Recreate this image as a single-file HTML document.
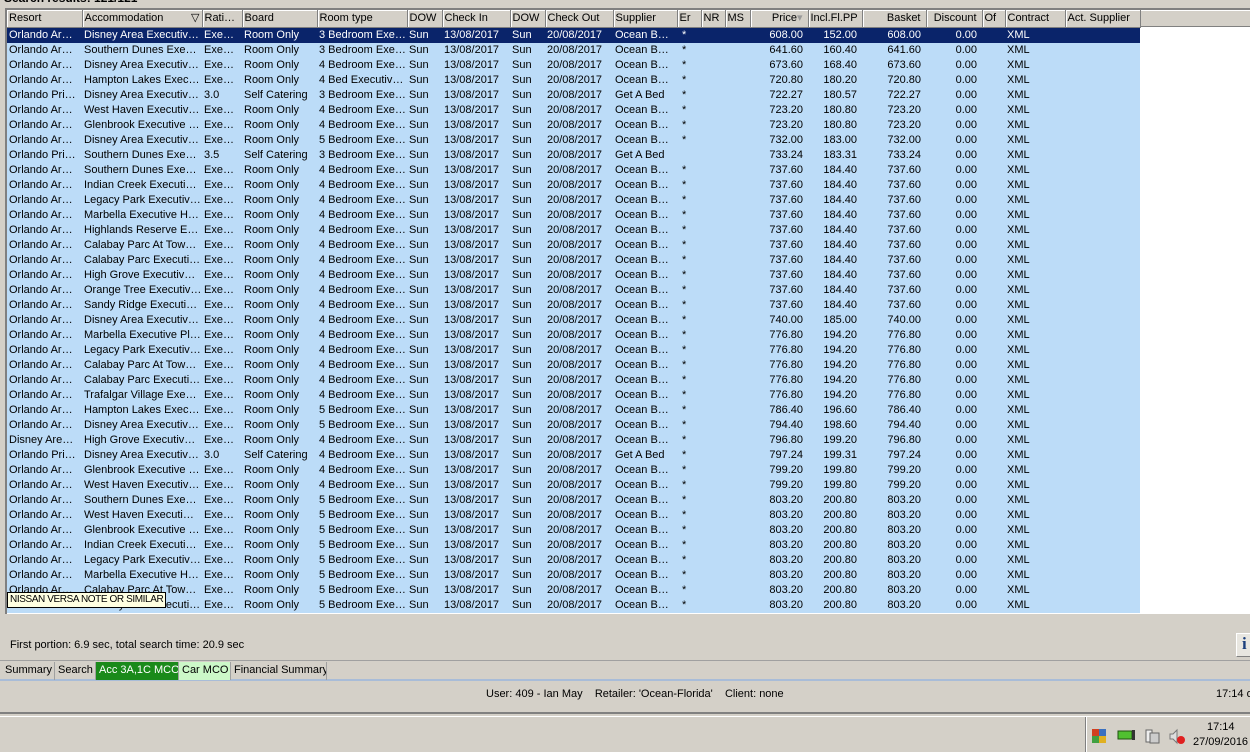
<!DOCTYPE html>
<html><head><meta charset="utf-8"><style>
*{margin:0;padding:0;box-sizing:border-box}
body{width:1250px;height:751px;background:#d4d0c8;font-family:"Liberation Sans",Tahoma,sans-serif;font-size:11px;position:relative;overflow:hidden;color:#000;white-space:nowrap}
.title{position:absolute;left:4px;top:-9px;font-weight:bold;font-size:12px}
.grid{position:absolute;left:5px;top:8px;width:1245px;height:606px;background:#fff;border-left:2px solid #808080;border-top:2px solid #808080}
table{position:absolute;left:0;top:0;border-collapse:collapse;table-layout:fixed;width:1133px}
td,th{height:15px;line-height:15px;padding:0 2px;white-space:nowrap;overflow:hidden;font-weight:normal;text-align:left}
th{height:17px;background:#d4d0c8;border-right:1px solid #808080;border-bottom:1px solid #808080;box-shadow:inset 1px 1px 0 #fff}
tr.r td{background:#bcdcf8}
tr.s td{background:#0a246a;color:#fff}
.n{text-align:right;padding-right:5px}
.hr{position:absolute;left:1133px;top:0;width:110px;height:17px;background:#d4d0c8;border-bottom:1px solid #808080;box-shadow:inset 1px 1px 0 #fff}
.tip{position:absolute;left:7px;top:592px;background:#ffffe1;border:1px solid #000;padding:0 2px;height:16px;line-height:14px;font-size:10px;letter-spacing:-0.4px}
.fp{position:absolute;left:10px;top:639px}
.ib{position:absolute;left:1236px;top:633px;width:20px;height:24px;background:#e8e6e0;border:1px solid #fff;border-right-color:#808080;border-bottom-color:#808080;font-family:"Liberation Serif",serif;font-weight:bold;font-size:17px;color:#1c3f7c;padding-left:5px}
.tabs{position:absolute;left:0;top:660px;width:1250px;height:21px;border-top:1px solid #a0a0a0;border-bottom:2px solid #a8bcd8}
.tab{position:absolute;top:1px;height:18px;line-height:17px;padding:0 3px;border-right:1px solid #a0a0a0;white-space:nowrap;overflow:hidden}
.sb{position:absolute;left:0;top:682px;width:1250px;height:32px;border-bottom:2px solid #808080}
.tb{position:absolute;left:0;top:716px;width:1250px;height:35px;border-top:1px solid #fff}
</style></head><body>
<div class="title">Search results: 121/121</div>
<div class="grid">
<div class="hr"></div>
<table>
<colgroup><col style="width:75px"><col style="width:120px"><col style="width:40px"><col style="width:75px"><col style="width:90px"><col style="width:35px"><col style="width:68px"><col style="width:35px"><col style="width:68px"><col style="width:64px"><col style="width:24px"><col style="width:24px"><col style="width:25px"><col style="width:58px"><col style="width:54px"><col style="width:64px"><col style="width:56px"><col style="width:23px"><col style="width:60px"><col style="width:75px"></colgroup>
<tr><th>Resort</th><th>Accommodation <span style="float:right">&#9661;</span></th><th>Rati…</th><th>Board</th><th>Room type</th><th>DOW</th><th>Check In</th><th>DOW</th><th>Check Out</th><th>Supplier</th><th>Er</th><th>NR</th><th>MS</th><th class="n">Price<span style="color:#999">&#9662;</span></th><th>Incl.Fl.PP</th><th class="n">Basket</th><th class="n">Discount</th><th>Of</th><th>Contract</th><th>Act. Supplier</th></tr>
<tr class="s"><td>Orlando Ar…</td><td>Disney Area Executiv…</td><td>Exe…</td><td>Room Only</td><td>3 Bedroom Exe…</td><td>Sun</td><td>13/08/2017</td><td>Sun</td><td>20/08/2017</td><td>Ocean B…</td><td>&nbsp;*</td><td></td><td></td><td class="n">608.00</td><td class="n">152.00</td><td class="n">608.00</td><td class="n">0.00</td><td></td><td>XML</td><td></td></tr>
<tr class="r"><td>Orlando Ar…</td><td>Southern Dunes Exe…</td><td>Exe…</td><td>Room Only</td><td>3 Bedroom Exe…</td><td>Sun</td><td>13/08/2017</td><td>Sun</td><td>20/08/2017</td><td>Ocean B…</td><td>&nbsp;*</td><td></td><td></td><td class="n">641.60</td><td class="n">160.40</td><td class="n">641.60</td><td class="n">0.00</td><td></td><td>XML</td><td></td></tr>
<tr class="r"><td>Orlando Ar…</td><td>Disney Area Executiv…</td><td>Exe…</td><td>Room Only</td><td>4 Bedroom Exe…</td><td>Sun</td><td>13/08/2017</td><td>Sun</td><td>20/08/2017</td><td>Ocean B…</td><td>&nbsp;*</td><td></td><td></td><td class="n">673.60</td><td class="n">168.40</td><td class="n">673.60</td><td class="n">0.00</td><td></td><td>XML</td><td></td></tr>
<tr class="r"><td>Orlando Ar…</td><td>Hampton Lakes Exec…</td><td>Exe…</td><td>Room Only</td><td>4 Bed Executiv…</td><td>Sun</td><td>13/08/2017</td><td>Sun</td><td>20/08/2017</td><td>Ocean B…</td><td>&nbsp;*</td><td></td><td></td><td class="n">720.80</td><td class="n">180.20</td><td class="n">720.80</td><td class="n">0.00</td><td></td><td>XML</td><td></td></tr>
<tr class="r"><td>Orlando Pri…</td><td>Disney Area Executiv…</td><td>3.0</td><td>Self Catering</td><td>3 Bedroom Exe…</td><td>Sun</td><td>13/08/2017</td><td>Sun</td><td>20/08/2017</td><td>Get A Bed</td><td>&nbsp;*</td><td></td><td></td><td class="n">722.27</td><td class="n">180.57</td><td class="n">722.27</td><td class="n">0.00</td><td></td><td>XML</td><td></td></tr>
<tr class="r"><td>Orlando Ar…</td><td>West Haven Executiv…</td><td>Exe…</td><td>Room Only</td><td>4 Bedroom Exe…</td><td>Sun</td><td>13/08/2017</td><td>Sun</td><td>20/08/2017</td><td>Ocean B…</td><td>&nbsp;*</td><td></td><td></td><td class="n">723.20</td><td class="n">180.80</td><td class="n">723.20</td><td class="n">0.00</td><td></td><td>XML</td><td></td></tr>
<tr class="r"><td>Orlando Ar…</td><td>Glenbrook Executive …</td><td>Exe…</td><td>Room Only</td><td>4 Bedroom Exe…</td><td>Sun</td><td>13/08/2017</td><td>Sun</td><td>20/08/2017</td><td>Ocean B…</td><td>&nbsp;*</td><td></td><td></td><td class="n">723.20</td><td class="n">180.80</td><td class="n">723.20</td><td class="n">0.00</td><td></td><td>XML</td><td></td></tr>
<tr class="r"><td>Orlando Ar…</td><td>Disney Area Executiv…</td><td>Exe…</td><td>Room Only</td><td>5 Bedroom Exe…</td><td>Sun</td><td>13/08/2017</td><td>Sun</td><td>20/08/2017</td><td>Ocean B…</td><td>&nbsp;*</td><td></td><td></td><td class="n">732.00</td><td class="n">183.00</td><td class="n">732.00</td><td class="n">0.00</td><td></td><td>XML</td><td></td></tr>
<tr class="r"><td>Orlando Pri…</td><td>Southern Dunes Exe…</td><td>3.5</td><td>Self Catering</td><td>3 Bedroom Exe…</td><td>Sun</td><td>13/08/2017</td><td>Sun</td><td>20/08/2017</td><td>Get A Bed</td><td></td><td></td><td></td><td class="n">733.24</td><td class="n">183.31</td><td class="n">733.24</td><td class="n">0.00</td><td></td><td>XML</td><td></td></tr>
<tr class="r"><td>Orlando Ar…</td><td>Southern Dunes Exe…</td><td>Exe…</td><td>Room Only</td><td>4 Bedroom Exe…</td><td>Sun</td><td>13/08/2017</td><td>Sun</td><td>20/08/2017</td><td>Ocean B…</td><td>&nbsp;*</td><td></td><td></td><td class="n">737.60</td><td class="n">184.40</td><td class="n">737.60</td><td class="n">0.00</td><td></td><td>XML</td><td></td></tr>
<tr class="r"><td>Orlando Ar…</td><td>Indian Creek Executi…</td><td>Exe…</td><td>Room Only</td><td>4 Bedroom Exe…</td><td>Sun</td><td>13/08/2017</td><td>Sun</td><td>20/08/2017</td><td>Ocean B…</td><td>&nbsp;*</td><td></td><td></td><td class="n">737.60</td><td class="n">184.40</td><td class="n">737.60</td><td class="n">0.00</td><td></td><td>XML</td><td></td></tr>
<tr class="r"><td>Orlando Ar…</td><td>Legacy Park Executiv…</td><td>Exe…</td><td>Room Only</td><td>4 Bedroom Exe…</td><td>Sun</td><td>13/08/2017</td><td>Sun</td><td>20/08/2017</td><td>Ocean B…</td><td>&nbsp;*</td><td></td><td></td><td class="n">737.60</td><td class="n">184.40</td><td class="n">737.60</td><td class="n">0.00</td><td></td><td>XML</td><td></td></tr>
<tr class="r"><td>Orlando Ar…</td><td>Marbella Executive H…</td><td>Exe…</td><td>Room Only</td><td>4 Bedroom Exe…</td><td>Sun</td><td>13/08/2017</td><td>Sun</td><td>20/08/2017</td><td>Ocean B…</td><td>&nbsp;*</td><td></td><td></td><td class="n">737.60</td><td class="n">184.40</td><td class="n">737.60</td><td class="n">0.00</td><td></td><td>XML</td><td></td></tr>
<tr class="r"><td>Orlando Ar…</td><td>Highlands Reserve E…</td><td>Exe…</td><td>Room Only</td><td>4 Bedroom Exe…</td><td>Sun</td><td>13/08/2017</td><td>Sun</td><td>20/08/2017</td><td>Ocean B…</td><td>&nbsp;*</td><td></td><td></td><td class="n">737.60</td><td class="n">184.40</td><td class="n">737.60</td><td class="n">0.00</td><td></td><td>XML</td><td></td></tr>
<tr class="r"><td>Orlando Ar…</td><td>Calabay Parc At Tow…</td><td>Exe…</td><td>Room Only</td><td>4 Bedroom Exe…</td><td>Sun</td><td>13/08/2017</td><td>Sun</td><td>20/08/2017</td><td>Ocean B…</td><td>&nbsp;*</td><td></td><td></td><td class="n">737.60</td><td class="n">184.40</td><td class="n">737.60</td><td class="n">0.00</td><td></td><td>XML</td><td></td></tr>
<tr class="r"><td>Orlando Ar…</td><td>Calabay Parc Executi…</td><td>Exe…</td><td>Room Only</td><td>4 Bedroom Exe…</td><td>Sun</td><td>13/08/2017</td><td>Sun</td><td>20/08/2017</td><td>Ocean B…</td><td>&nbsp;*</td><td></td><td></td><td class="n">737.60</td><td class="n">184.40</td><td class="n">737.60</td><td class="n">0.00</td><td></td><td>XML</td><td></td></tr>
<tr class="r"><td>Orlando Ar…</td><td>High Grove Executiv…</td><td>Exe…</td><td>Room Only</td><td>4 Bedroom Exe…</td><td>Sun</td><td>13/08/2017</td><td>Sun</td><td>20/08/2017</td><td>Ocean B…</td><td>&nbsp;*</td><td></td><td></td><td class="n">737.60</td><td class="n">184.40</td><td class="n">737.60</td><td class="n">0.00</td><td></td><td>XML</td><td></td></tr>
<tr class="r"><td>Orlando Ar…</td><td>Orange Tree Executiv…</td><td>Exe…</td><td>Room Only</td><td>4 Bedroom Exe…</td><td>Sun</td><td>13/08/2017</td><td>Sun</td><td>20/08/2017</td><td>Ocean B…</td><td>&nbsp;*</td><td></td><td></td><td class="n">737.60</td><td class="n">184.40</td><td class="n">737.60</td><td class="n">0.00</td><td></td><td>XML</td><td></td></tr>
<tr class="r"><td>Orlando Ar…</td><td>Sandy Ridge Executi…</td><td>Exe…</td><td>Room Only</td><td>4 Bedroom Exe…</td><td>Sun</td><td>13/08/2017</td><td>Sun</td><td>20/08/2017</td><td>Ocean B…</td><td>&nbsp;*</td><td></td><td></td><td class="n">737.60</td><td class="n">184.40</td><td class="n">737.60</td><td class="n">0.00</td><td></td><td>XML</td><td></td></tr>
<tr class="r"><td>Orlando Ar…</td><td>Disney Area Executiv…</td><td>Exe…</td><td>Room Only</td><td>4 Bedroom Exe…</td><td>Sun</td><td>13/08/2017</td><td>Sun</td><td>20/08/2017</td><td>Ocean B…</td><td>&nbsp;*</td><td></td><td></td><td class="n">740.00</td><td class="n">185.00</td><td class="n">740.00</td><td class="n">0.00</td><td></td><td>XML</td><td></td></tr>
<tr class="r"><td>Orlando Ar…</td><td>Marbella Executive Pl…</td><td>Exe…</td><td>Room Only</td><td>4 Bedroom Exe…</td><td>Sun</td><td>13/08/2017</td><td>Sun</td><td>20/08/2017</td><td>Ocean B…</td><td>&nbsp;*</td><td></td><td></td><td class="n">776.80</td><td class="n">194.20</td><td class="n">776.80</td><td class="n">0.00</td><td></td><td>XML</td><td></td></tr>
<tr class="r"><td>Orlando Ar…</td><td>Legacy Park Executiv…</td><td>Exe…</td><td>Room Only</td><td>4 Bedroom Exe…</td><td>Sun</td><td>13/08/2017</td><td>Sun</td><td>20/08/2017</td><td>Ocean B…</td><td>&nbsp;*</td><td></td><td></td><td class="n">776.80</td><td class="n">194.20</td><td class="n">776.80</td><td class="n">0.00</td><td></td><td>XML</td><td></td></tr>
<tr class="r"><td>Orlando Ar…</td><td>Calabay Parc At Tow…</td><td>Exe…</td><td>Room Only</td><td>4 Bedroom Exe…</td><td>Sun</td><td>13/08/2017</td><td>Sun</td><td>20/08/2017</td><td>Ocean B…</td><td>&nbsp;*</td><td></td><td></td><td class="n">776.80</td><td class="n">194.20</td><td class="n">776.80</td><td class="n">0.00</td><td></td><td>XML</td><td></td></tr>
<tr class="r"><td>Orlando Ar…</td><td>Calabay Parc Executi…</td><td>Exe…</td><td>Room Only</td><td>4 Bedroom Exe…</td><td>Sun</td><td>13/08/2017</td><td>Sun</td><td>20/08/2017</td><td>Ocean B…</td><td>&nbsp;*</td><td></td><td></td><td class="n">776.80</td><td class="n">194.20</td><td class="n">776.80</td><td class="n">0.00</td><td></td><td>XML</td><td></td></tr>
<tr class="r"><td>Orlando Ar…</td><td>Trafalgar Village Exe…</td><td>Exe…</td><td>Room Only</td><td>4 Bedroom Exe…</td><td>Sun</td><td>13/08/2017</td><td>Sun</td><td>20/08/2017</td><td>Ocean B…</td><td>&nbsp;*</td><td></td><td></td><td class="n">776.80</td><td class="n">194.20</td><td class="n">776.80</td><td class="n">0.00</td><td></td><td>XML</td><td></td></tr>
<tr class="r"><td>Orlando Ar…</td><td>Hampton Lakes Exec…</td><td>Exe…</td><td>Room Only</td><td>5 Bedroom Exe…</td><td>Sun</td><td>13/08/2017</td><td>Sun</td><td>20/08/2017</td><td>Ocean B…</td><td>&nbsp;*</td><td></td><td></td><td class="n">786.40</td><td class="n">196.60</td><td class="n">786.40</td><td class="n">0.00</td><td></td><td>XML</td><td></td></tr>
<tr class="r"><td>Orlando Ar…</td><td>Disney Area Executiv…</td><td>Exe…</td><td>Room Only</td><td>5 Bedroom Exe…</td><td>Sun</td><td>13/08/2017</td><td>Sun</td><td>20/08/2017</td><td>Ocean B…</td><td>&nbsp;*</td><td></td><td></td><td class="n">794.40</td><td class="n">198.60</td><td class="n">794.40</td><td class="n">0.00</td><td></td><td>XML</td><td></td></tr>
<tr class="r"><td>Disney Are…</td><td>High Grove Executiv…</td><td>Exe…</td><td>Room Only</td><td>4 Bedroom Exe…</td><td>Sun</td><td>13/08/2017</td><td>Sun</td><td>20/08/2017</td><td>Ocean B…</td><td>&nbsp;*</td><td></td><td></td><td class="n">796.80</td><td class="n">199.20</td><td class="n">796.80</td><td class="n">0.00</td><td></td><td>XML</td><td></td></tr>
<tr class="r"><td>Orlando Pri…</td><td>Disney Area Executiv…</td><td>3.0</td><td>Self Catering</td><td>4 Bedroom Exe…</td><td>Sun</td><td>13/08/2017</td><td>Sun</td><td>20/08/2017</td><td>Get A Bed</td><td>&nbsp;*</td><td></td><td></td><td class="n">797.24</td><td class="n">199.31</td><td class="n">797.24</td><td class="n">0.00</td><td></td><td>XML</td><td></td></tr>
<tr class="r"><td>Orlando Ar…</td><td>Glenbrook Executive …</td><td>Exe…</td><td>Room Only</td><td>4 Bedroom Exe…</td><td>Sun</td><td>13/08/2017</td><td>Sun</td><td>20/08/2017</td><td>Ocean B…</td><td>&nbsp;*</td><td></td><td></td><td class="n">799.20</td><td class="n">199.80</td><td class="n">799.20</td><td class="n">0.00</td><td></td><td>XML</td><td></td></tr>
<tr class="r"><td>Orlando Ar…</td><td>West Haven Executiv…</td><td>Exe…</td><td>Room Only</td><td>4 Bedroom Exe…</td><td>Sun</td><td>13/08/2017</td><td>Sun</td><td>20/08/2017</td><td>Ocean B…</td><td>&nbsp;*</td><td></td><td></td><td class="n">799.20</td><td class="n">199.80</td><td class="n">799.20</td><td class="n">0.00</td><td></td><td>XML</td><td></td></tr>
<tr class="r"><td>Orlando Ar…</td><td>Southern Dunes Exe…</td><td>Exe…</td><td>Room Only</td><td>5 Bedroom Exe…</td><td>Sun</td><td>13/08/2017</td><td>Sun</td><td>20/08/2017</td><td>Ocean B…</td><td>&nbsp;*</td><td></td><td></td><td class="n">803.20</td><td class="n">200.80</td><td class="n">803.20</td><td class="n">0.00</td><td></td><td>XML</td><td></td></tr>
<tr class="r"><td>Orlando Ar…</td><td>West Haven Executi…</td><td>Exe…</td><td>Room Only</td><td>5 Bedroom Exe…</td><td>Sun</td><td>13/08/2017</td><td>Sun</td><td>20/08/2017</td><td>Ocean B…</td><td>&nbsp;*</td><td></td><td></td><td class="n">803.20</td><td class="n">200.80</td><td class="n">803.20</td><td class="n">0.00</td><td></td><td>XML</td><td></td></tr>
<tr class="r"><td>Orlando Ar…</td><td>Glenbrook Executive …</td><td>Exe…</td><td>Room Only</td><td>5 Bedroom Exe…</td><td>Sun</td><td>13/08/2017</td><td>Sun</td><td>20/08/2017</td><td>Ocean B…</td><td>&nbsp;*</td><td></td><td></td><td class="n">803.20</td><td class="n">200.80</td><td class="n">803.20</td><td class="n">0.00</td><td></td><td>XML</td><td></td></tr>
<tr class="r"><td>Orlando Ar…</td><td>Indian Creek Executi…</td><td>Exe…</td><td>Room Only</td><td>5 Bedroom Exe…</td><td>Sun</td><td>13/08/2017</td><td>Sun</td><td>20/08/2017</td><td>Ocean B…</td><td>&nbsp;*</td><td></td><td></td><td class="n">803.20</td><td class="n">200.80</td><td class="n">803.20</td><td class="n">0.00</td><td></td><td>XML</td><td></td></tr>
<tr class="r"><td>Orlando Ar…</td><td>Legacy Park Executiv…</td><td>Exe…</td><td>Room Only</td><td>5 Bedroom Exe…</td><td>Sun</td><td>13/08/2017</td><td>Sun</td><td>20/08/2017</td><td>Ocean B…</td><td>&nbsp;*</td><td></td><td></td><td class="n">803.20</td><td class="n">200.80</td><td class="n">803.20</td><td class="n">0.00</td><td></td><td>XML</td><td></td></tr>
<tr class="r"><td>Orlando Ar…</td><td>Marbella Executive H…</td><td>Exe…</td><td>Room Only</td><td>5 Bedroom Exe…</td><td>Sun</td><td>13/08/2017</td><td>Sun</td><td>20/08/2017</td><td>Ocean B…</td><td>&nbsp;*</td><td></td><td></td><td class="n">803.20</td><td class="n">200.80</td><td class="n">803.20</td><td class="n">0.00</td><td></td><td>XML</td><td></td></tr>
<tr class="r"><td>Orlando Ar…</td><td>Calabay Parc At Tow…</td><td>Exe…</td><td>Room Only</td><td>5 Bedroom Exe…</td><td>Sun</td><td>13/08/2017</td><td>Sun</td><td>20/08/2017</td><td>Ocean B…</td><td>&nbsp;*</td><td></td><td></td><td class="n">803.20</td><td class="n">200.80</td><td class="n">803.20</td><td class="n">0.00</td><td></td><td>XML</td><td></td></tr>
<tr class="r"><td>Orlando Ar…</td><td>Calabay Parc Executi…</td><td>Exe…</td><td>Room Only</td><td>5 Bedroom Exe…</td><td>Sun</td><td>13/08/2017</td><td>Sun</td><td>20/08/2017</td><td>Ocean B…</td><td>&nbsp;*</td><td></td><td></td><td class="n">803.20</td><td class="n">200.80</td><td class="n">803.20</td><td class="n">0.00</td><td></td><td>XML</td><td></td></tr>
</table>
</div>
<div class="tip">NISSAN VERSA NOTE OR SIMILAR</div>
<div class="fp">First portion: 6.9 sec, total search time: 20.9 sec</div>
<div class="ib">i</div>
<div class="tabs">
<div class="tab" style="left:2px;width:53px">Summary</div>
<div class="tab" style="left:55px;width:41px">Search</div>
<div class="tab" style="left:96px;width:83px;background:#1a8a1a;color:#fff">Acc 3A,1C MCO</div>
<div class="tab" style="left:179px;width:52px;background:#ccf8c8">Car MCO</div>
<div class="tab" style="left:231px;width:96px">Financial Summary</div>
</div>
<div class="sb">
<div style="position:absolute;left:486px;top:6px">User: 409 - Ian May &nbsp;&nbsp;&nbsp;Retailer: 'Ocean-Florida' &nbsp;&nbsp;&nbsp;Client: none</div>
<div style="position:absolute;left:1216px;top:6px;white-space:nowrap">17:14 o</div>
</div>
<div class="tb">
<div style="position:absolute;left:1085px;top:0;width:2px;height:35px;border-left:1px solid #808080;border-right:1px solid #fff"></div>
<svg style="position:absolute;left:1092px;top:10px" width="100" height="20">
<rect x="0" y="2" width="7" height="7" fill="#d04020"/><rect x="7" y="2" width="7" height="7" fill="#3a70c0"/><rect x="0" y="9" width="7" height="7" fill="#40a040"/><rect x="7" y="9" width="7" height="7" fill="#e0b020"/>
<rect x="26" y="4" width="14" height="8" fill="#50c030" stroke="#205010"/><rect x="40" y="3" width="3" height="10" fill="#333"/>
<rect x="54" y="3" width="6" height="12" fill="#eee" stroke="#666"/><rect x="58" y="6" width="9" height="10" fill="#ccc" stroke="#666"/>
<path d="M78 7h3l4-4v13l-4-4h-3z" fill="#ddd" stroke="#777"/><circle cx="89" cy="13" r="4" fill="#e02020"/>
</svg>
<div style="position:absolute;left:1207px;top:4px">17:14</div>
<div style="position:absolute;left:1193px;top:19px">27/09/2016</div>
</div>
</body></html>
